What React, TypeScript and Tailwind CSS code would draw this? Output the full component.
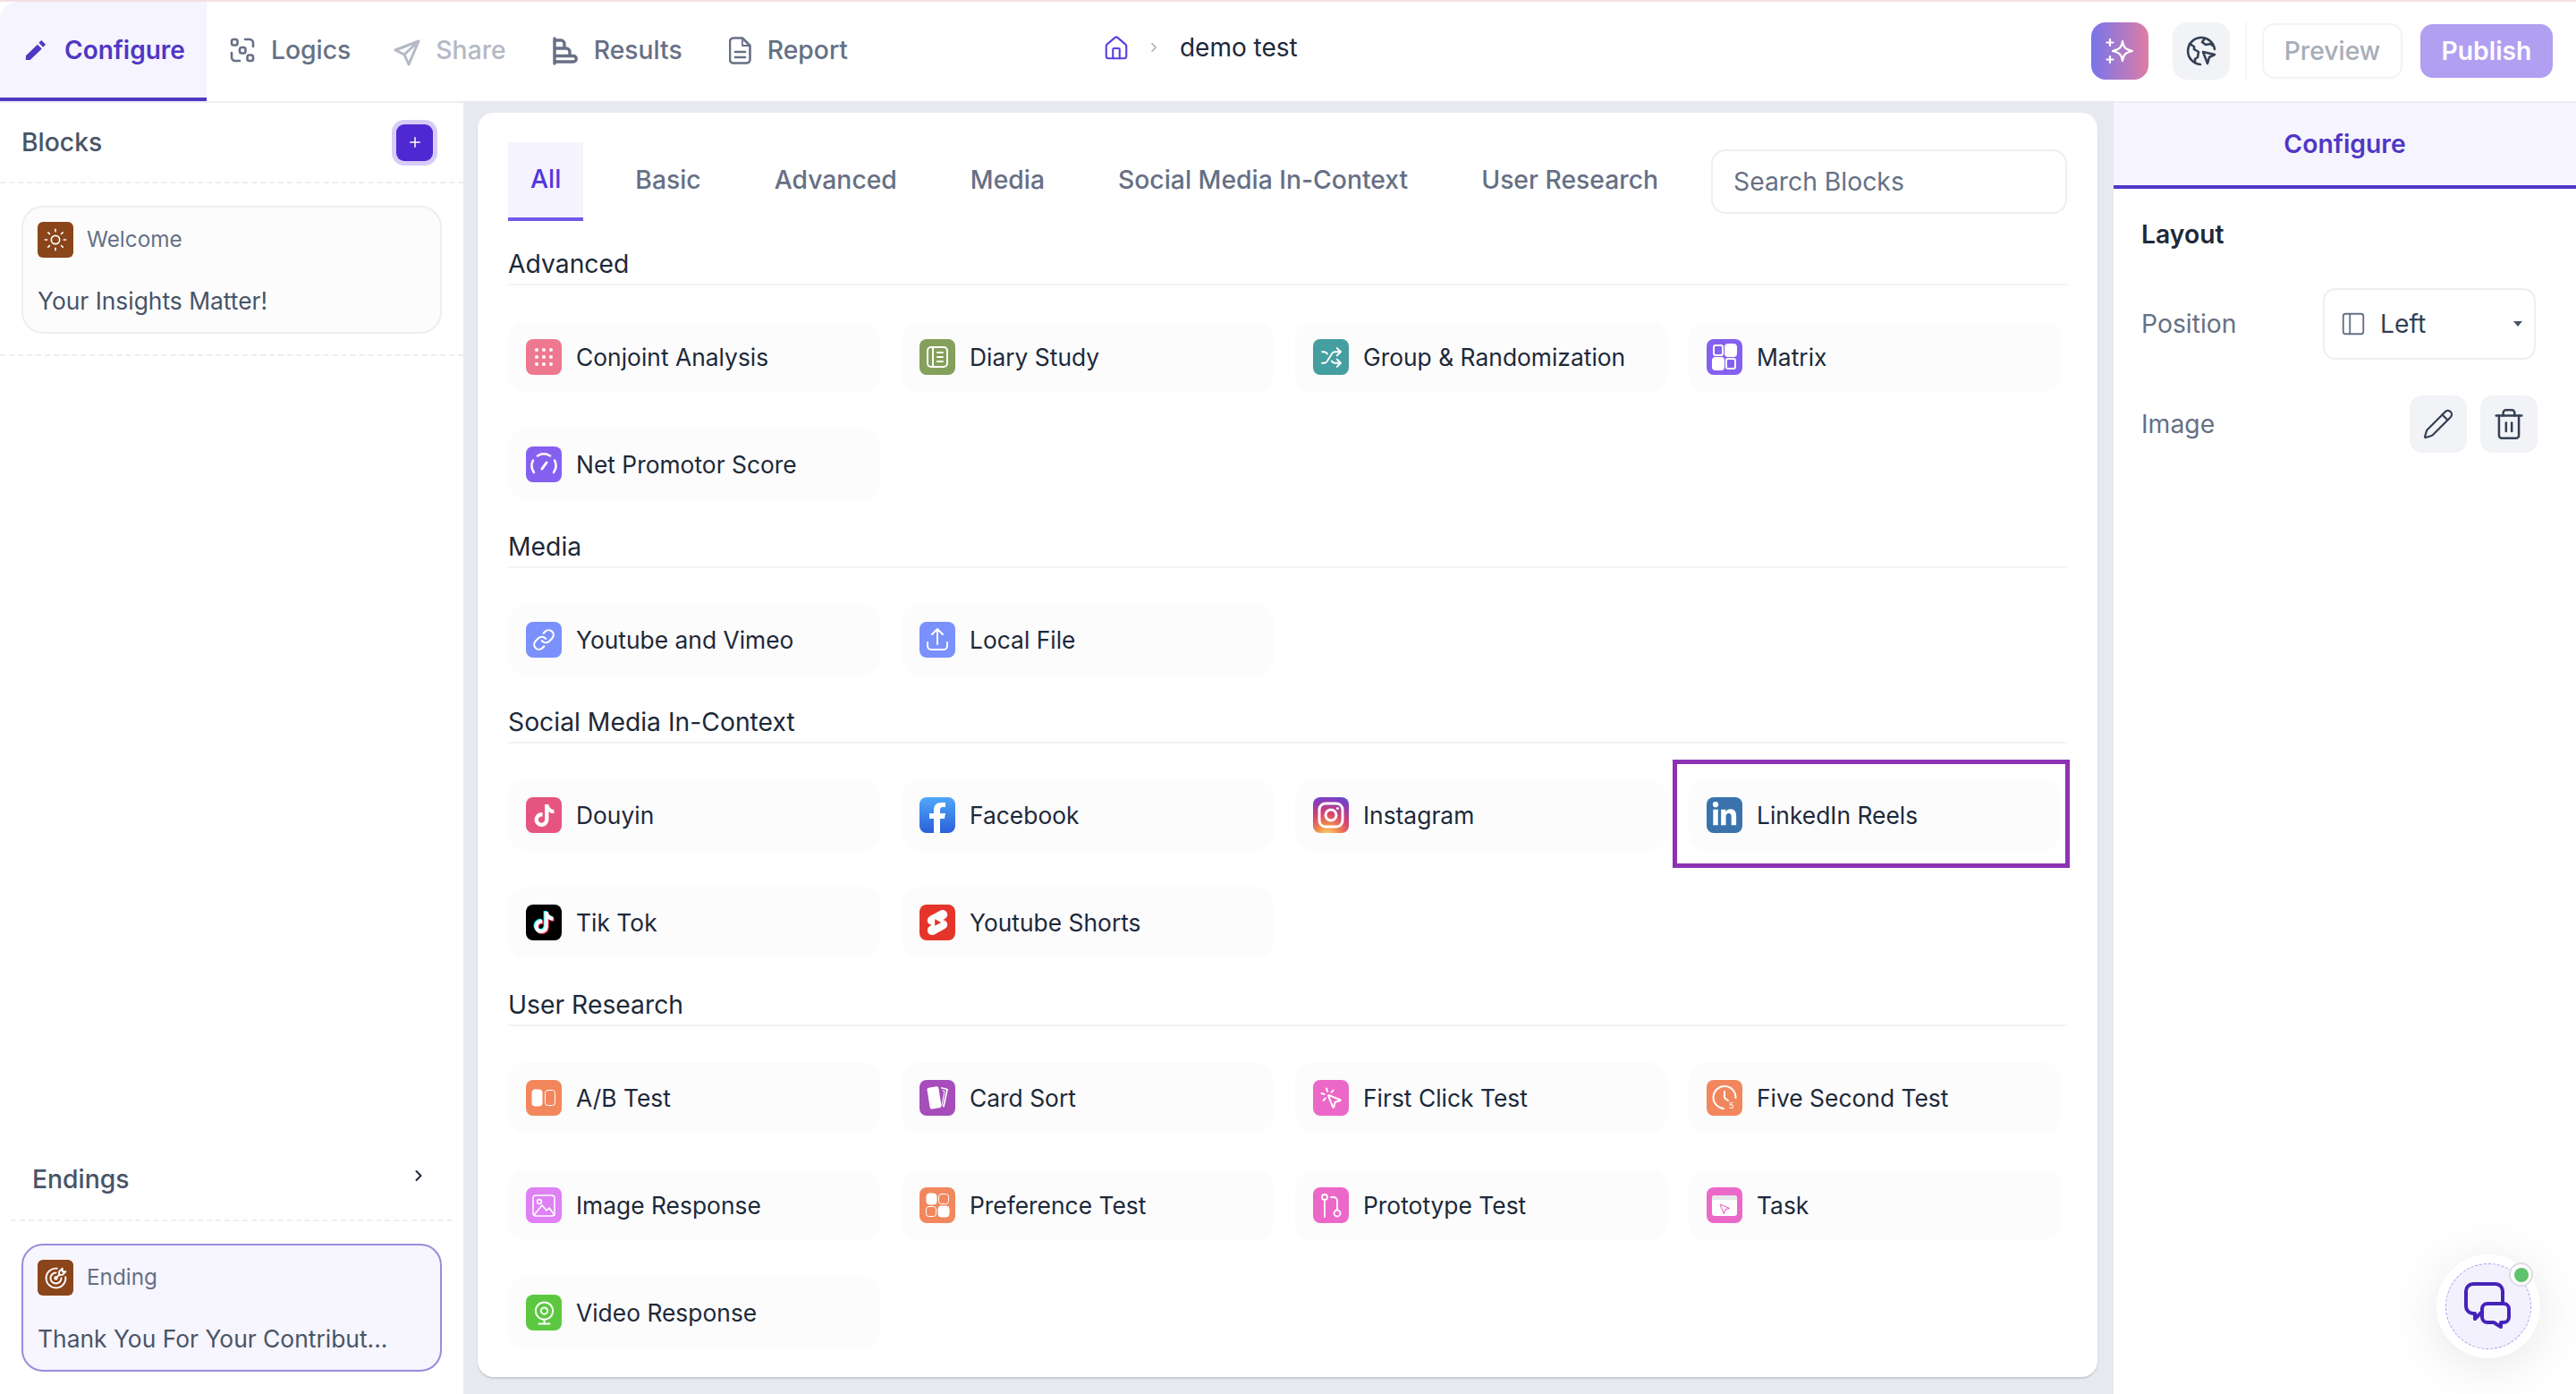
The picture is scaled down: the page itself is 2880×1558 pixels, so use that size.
import React from "react";
import { Shuffle, Link, MousePointerClick, Webcam, Sun, House, ChevronRight, Pencil, Trash2, PanelLeft, Plus, MousePointer2 } from "lucide-react";
import { FaTiktok, FaLinkedinIn } from "react-icons/fa";
import { SiYoutubeshorts } from "react-icons/si";
import { TbTargetArrow } from "react-icons/tb";

const V = ({ children }: { children: React.ReactNode }) => (
  <svg viewBox="0 0 40 40" className="w-full h-full" fill="none" stroke="white" strokeWidth="2" strokeLinecap="round" strokeLinejoin="round">
    {children}
  </svg>
);

const Dots = () => (
  <V>
    {[12, 20, 28].flatMap((y) => [12, 20, 28].map((x) => <circle key={`${x}-${y}`} cx={x} cy={y} r="2" fill="white" stroke="none" />))}
  </V>
);

type Item = { name: string; bg: string; icon: React.ReactNode };

const lucideCls = "text-white";

const advanced: Item[] = [
  { name: "Conjoint Analysis", bg: "bg-[#ee7890]", icon: <Dots /> },
  { name: "Diary Study", bg: "bg-[#84a05a]", icon: <V><rect x="9" y="9" width="22" height="22" rx="4" /><path d="M15 9v22M20 15h6M20 20h6M20 25h6" /></V> },
  { name: "Group & Randomization", bg: "bg-[#459ea0]", icon: <Shuffle size={25} strokeWidth={1.8} className={lucideCls} /> },
  { name: "Matrix", bg: "bg-[#8560f0]", icon: <V><rect x="8" y="7" width="10" height="11" rx="2" /><rect x="21" y="6" width="12" height="13" rx="3" fill="white" /><rect x="7" y="21" width="12" height="13" rx="3" fill="white" /><rect x="22" y="22" width="10" height="11" rx="2" /></V> },
  { name: "Net Promotor Score", bg: "bg-[#8560f0]", icon: <V><path d="M13 10.5A13 13 0 0 1 27 10.5" strokeWidth="2.5" /><path d="M8 15.5A13 13 0 0 0 9 29" strokeWidth="2.5" /><path d="M32 15.5A13 13 0 0 1 31 29" strokeWidth="2.5" /><path d="M18 25l5-7" strokeWidth="3" /></V> },
];
const media: Item[] = [
  { name: "Youtube and Vimeo", bg: "bg-[#7a90fb]", icon: <Link size={26} strokeWidth={2} className={lucideCls} /> },
  { name: "Local File", bg: "bg-[#7a90fb]", icon: <V><path d="M20 8v17M14 14l6-6 6 6M9 23v4a4 4 0 0 0 4 4h14a4 4 0 0 0 4-4v-4" /></V> },
];
const social: Item[] = [
  { name: "Douyin", bg: "bg-[#e5557f]", icon: <FaTiktok size={25} className="text-white" /> },
  { name: "Facebook", bg: "bg-[linear-gradient(180deg,#4fa8f8,#2a60d8)]", icon: <svg viewBox="0 0 40 40" className="w-full h-full"><path fill="white" d="M23 40V24h5l1-6h-6v-4c0-2 1-3 3-3h3V6h-5c-5 0-8 3-8 8v4h-5v6h5v16z" /></svg> },
  { name: "Instagram", bg: "bg-[radial-gradient(circle_at_40%_110%,#f9e08a_0%,#f2994a_22%,#d9436c_52%,#8a3ab9_80%,#5b51d8_100%)]", icon: <V><rect x="7" y="7" width="26" height="26" rx="7" strokeWidth="3" /><circle cx="20" cy="20" r="6" strokeWidth="3" /><circle cx="27.5" cy="12.5" r="1.5" fill="white" stroke="none" /></V> },
  { name: "LinkedIn Reels", bg: "bg-[#3a73ac]", icon: <FaLinkedinIn size={30} className="text-white" /> },
  { name: "Tik Tok", bg: "bg-black", icon: <FaTiktok size={24} className="text-white [filter:drop-shadow(-1px_-1px_0_#25f4ee)_drop-shadow(1px_1px_0_#fe2c55)]" /> },
  { name: "Youtube Shorts", bg: "bg-[#e5352b]", icon: <SiYoutubeshorts size={28} className="text-white" /> },
];
const research: Item[] = [
  { name: "A/B Test", bg: "bg-[#f2875e]", icon: <V><rect x="7" y="11" width="11" height="18" rx="3" fill="white" strokeWidth="1" /><rect x="21.5" y="11.5" width="11" height="17" rx="3" strokeWidth="1" /></V> },
  { name: "Card Sort", bg: "bg-[#a64dbb]", icon: <V><rect x="10" y="8" width="13" height="24" rx="2" fill="white" stroke="none" transform="rotate(-9 16 20)" /><path d="M25 9l6 1.5-4 19" strokeWidth="1.8" /><path d="M26 12l2 .5-3 16" stroke="white" strokeWidth="1" /></V> },
  { name: "First Click Test", bg: "bg-[#ec68c8]", icon: <MousePointerClick size={27} strokeWidth={1.8} className={lucideCls} /> },
  { name: "Five Second Test", bg: "bg-[#f2875e]", icon: <V><path d="M19 32A12.5 12.5 0 1 1 32.5 20" /><path d="M20 13v7l4 3" /><text x="25" y="32" fill="white" stroke="none" fontSize="9" fontFamily="Inter, sans-serif">5</text></V> },
  { name: "Image Response", bg: "bg-[#df80f5]", icon: <V><rect x="8" y="9" width="24" height="23" rx="3" strokeWidth="1.6" /><circle cx="15" cy="16" r="2.4" strokeWidth="1.6" /><path d="M9 31l9-11 5 6 3-3 6 8" strokeWidth="1.6" /></V> },
  { name: "Preference Test", bg: "bg-[#f2875e]", icon: <V><rect x="8" y="7" width="11" height="12" rx="3" fill="white" strokeWidth="1" /><rect x="21.5" y="7.5" width="11" height="11" rx="3" strokeWidth="1" /><rect x="7.5" y="21.5" width="11" height="11" rx="3" strokeWidth="1" /><rect x="21" y="21" width="12" height="12" rx="3" fill="white" strokeWidth="1" /></V> },
  { name: "Prototype Test", bg: "bg-[#ec68c8]", icon: <V><circle cx="13" cy="11" r="3" strokeWidth="1.8" /><path d="M13 14v19" strokeWidth="1.8" /><circle cx="27" cy="29" r="3.5" strokeWidth="1.8" /><path d="M20 11h3a4 4 0 0 1 4 4v10" strokeWidth="1.8" /></V> },
  { name: "Task", bg: "bg-[#ec68c8]", icon: <div className="w-[28px] h-[23px] rounded-[3px] bg-white overflow-hidden flex flex-col items-center"><div className="w-full h-[5px] bg-[#e5e7eb] shrink-0" /><MousePointer2 size={14} strokeWidth={1.8} className="text-[#ec68c8] mt-[3px]" /></div> },
  { name: "Video Response", bg: "bg-[#5cc841]", icon: <Webcam size={29} strokeWidth={1.6} className={lucideCls} /> },
];

const Card = ({ item }: { item: Item }) => (
  <div className="relative h-[80px] rounded-[20px] bg-[#fcfcfd] pl-[20px] flex items-center gap-[16px]">
    <div className={`w-[40px] h-[40px] rounded-[8px] overflow-hidden flex items-center justify-center shrink-0 ${item.bg}`}>{item.icon}</div>
    <span className="text-[#1d2939] text-[26.4px] leading-[36px] -mt-[1px]">{item.name}</span>
    {item.name === "LinkedIn Reels" && (
      <div className="absolute -left-[18px] -right-[10px] -top-[22px] -bottom-[19px] border-[5px] border-[#8e32b4]" />
    )}
  </div>
);

const Section = ({ title, items, first }: { title: string; items: Item[]; first?: boolean }) => (
  <section className={first ? "mt-[30px]" : "mt-[34px]"}>
    <h3 className="h-[42px] leading-[37px] border-b-2 border-[#f2f3f5] text-[#1d2939] text-[28.3px]">{title}</h3>
    <div className="mt-[40px] grid grid-cols-[repeat(4,416px)] gap-x-[24px] gap-y-[40px]">
      {items.map((i) => (
        <Card key={i.name} item={i} />
      ))}
    </div>
  </section>
);

const BlockCard = ({ icon, label, title, active }: { icon: React.ReactNode; label: string; title: string; active?: boolean }) => (
  <div className={`mx-[24px] h-[143px] rounded-[24px] border-2 pl-[16px] pt-[16px] ${active ? "border-[#9a8cdc] bg-[#f7f5fe]" : "border-[#eceef2] bg-[#fcfcfd]"}`}>
    <div className="flex items-center gap-[15px]">
      <div className="w-[40px] h-[40px] rounded-[6px] bg-[#8b451a] flex items-center justify-center shrink-0">{icon}</div>
      <span className="text-[24.3px] text-[#667085] -mt-[2px]">{label}</span>
    </div>
    <div className="mt-[30px] text-[26.4px] leading-[36px] text-[#475467]">{title}</div>
  </div>
);

const TopTab = ({ icon, label, cls, ml }: { icon: React.ReactNode; label: string; cls: string; ml: string }) => (
  <div className={`flex items-center gap-[18px] text-[28.3px] font-medium ${cls} ${ml}`}>
    {icon}
    <span className="-mt-[3px]">{label}</span>
  </div>
);

export default function App() {
  return (
    <div className="relative w-[2880px] h-[1558px] overflow-hidden flex flex-col bg-white [font-family:Inter,sans-serif]">
      <div className="h-[2px] bg-[#f3e0e0] shrink-0" />
      {/* header */}
      <header className="h-[111px] shrink-0 flex items-stretch">
        <div className="w-[231px] h-[111px] bg-[#f6f4fe] rounded-tl-[20px] border-b-[4px] border-[#5037c4] flex items-center pl-[27px] gap-[19px] text-[#5037c4] text-[28px] font-semibold">
          <svg viewBox="0 0 27 27" className="w-[26px] h-[26px]" fill="currentColor"><path d="M20 2l5 5-3 3-5-5zM15.5 7l5 5L7 25H2v-5z" /></svg>
          <span>Configure</span>
        </div>
        <div className="flex items-center ml-[26px]">
          <TopTab
            cls="text-[#667085]"
            ml=""
            label="Logics"
            icon={
              <svg viewBox="0 0 28 28" className="w-[28px] h-[28px] -mt-[4px]" fill="none" stroke="currentColor" strokeWidth="2.6" strokeLinecap="round">
                <rect x="2" y="2" width="6.5" height="6.5" rx="2.2" />
                <path d="M17 2h5a4 4 0 0 1 4 4v4" />
                <rect x="11" y="11" width="6.5" height="6.5" rx="2.2" />
                <path d="M2 17v5a4 4 0 0 0 4 4h5" />
                <rect x="19.5" y="19.5" width="6.5" height="6.5" rx="2.2" />
              </svg>
            }
          />
          <TopTab
            cls="text-[#b4b9c4]"
            ml="ml-[47px]"
            label="Share"
            icon={
              <svg viewBox="0 0 32 32" className="w-[32px] h-[32px] mt-[2px] -mr-[2px]" fill="none" stroke="currentColor" strokeWidth="3" strokeLinejoin="round">
                <path d="M29 3L3 13l10 5 5 11zM29 3L13 18" />
              </svg>
            }
          />
          <TopTab
            cls="text-[#667085]"
            ml="ml-[52px]"
            label="Results"
            icon={
              <svg viewBox="0 0 28 32" className="w-[28px] h-[32px] -mt-[2px]" fill="none" stroke="currentColor" strokeWidth="3.4" strokeLinecap="round">
                <path d="M2 2v28M2 4h7a4 4 0 0 1 4 4v5M2 13h13a4 4 0 0 1 4 4v4M2 21.5h21a3 3 0 0 1 0 6.5H2" />
              </svg>
            }
          />
          <TopTab
            cls="text-[#667085]"
            ml="ml-[52px]"
            label="Report"
            icon={
              <svg viewBox="0 0 25 31" className="w-[25px] h-[31px] -mt-[2px]" fill="none" stroke="currentColor" strokeWidth="2.6" strokeLinejoin="round" strokeLinecap="round">
                <path d="M5 1.5h10l8.5 8.5v15.5a4 4 0 0 1-4 4H5a4 4 0 0 1-4-4v-20a4 4 0 0 1 4-4z" />
                <path d="M15 2v8h8" strokeWidth="1.8" />
                <path d="M7 17h11M7 23h11" />
              </svg>
            }
          />
        </div>
        <div className="flex items-center ml-[285px] -mt-[9px]">
          <House size={30} strokeWidth={1.7} className="text-[#5d3fe0] mt-[2px]" />
          <ChevronRight size={18} strokeWidth={1.5} className="text-[#98a2b3] ml-[18px]" />
          <span className="ml-[20px] text-[28px] text-[#1d2939]">demo test</span>
        </div>
        <div className="ml-auto mr-[26px] flex items-center -mt-[2px]">
          <div className="w-[64px] h-[64px] rounded-[16px] bg-[linear-gradient(90deg,#7675ea,#de7da6)] flex items-center justify-center">
            <svg viewBox="0 0 32 32" className="w-[32px] h-[32px]" fill="none" stroke="white" strokeWidth="2.2" strokeLinecap="round" strokeLinejoin="round">
              <path d="M19 5c1 7 3 9 11 11-8 2-10 4-11 11-1-7-3-9-11-11 8-2 10-4 11-11z" />
              <path d="M5 3v7M1.5 6.5h7M5 22v7M1.5 25.5h7" />
            </svg>
          </div>
          <div className="ml-[27px] w-[64px] h-[64px] rounded-[16px] bg-[#f2f3f7] flex items-center justify-center">
            <svg viewBox="0 0 34 34" className="w-[34px] h-[34px]" fill="none" stroke="#344054" strokeWidth="2.6" strokeLinecap="round" strokeLinejoin="round">
              <path d="M16 32A15 15 0 1 1 32 15" />
              <path d="M4 9l5 3v3l5 3-1 6-3 2v3M21 3l-3 4 4 3 5-1 3 2" />
              <path d="M19 18l13 3-6 3-2 7z" />
            </svg>
          </div>
          <div className="ml-[17px] w-[2px] h-[64px] bg-[#f5f5f7]" />
          <div className="ml-[17px] w-[157px] h-[62px] pt-[2px] rounded-[14px] border-2 border-[#f2f3f5] flex items-center justify-center text-[28.3px] font-medium text-[#a8adb7]">Preview</div>
          <div className="ml-[20px] w-[148px] h-[60px] pt-[2px] rounded-[14px] bg-[#b19ff2] flex items-center justify-center text-[28.3px] font-semibold text-white">Publish</div>
        </div>
      </header>

      <div className="flex-1 min-h-0 flex">
        {/* left */}
        <aside className="w-[518px] shrink-0 flex flex-col border-t-2 border-[#eceef2]">
          <div className="h-[90px] shrink-0 border-b-2 border-dashed border-[#eceef2] flex items-center justify-between pl-[24px] pr-[29px]">
            <span className="text-[28.3px] font-medium text-[#475467]">Blocks</span>
            <div className="w-[41px] h-[41px] rounded-[9px] bg-[#5028d2] ring-[5px] ring-[#d6ccf8] flex items-center justify-center mr-[5px]">
              <Plus size={18} strokeWidth={2} className="text-white" />
            </div>
          </div>
          <div className="pt-[25px] pb-[23px] border-b-2 border-dashed border-[#eceef2]">
            <BlockCard icon={<Sun size={28} strokeWidth={1.4} className="text-white" />} label="Welcome" title="Your Insights Matter!" />
          </div>
          <div className="flex-1" />
          <div className="mx-[12px] h-[92px] border-b-2 border-dashed border-[#eceef2] flex items-center justify-between pl-[24px] pr-[28px]">
            <span className="text-[28.3px] font-medium text-[#475467]">Endings</span>
            <ChevronRight size={20} strokeWidth={2.4} className="text-[#1d2939] -mt-[8px]" />
          </div>
          <div className="pt-[25px] pb-[25px]">
            <BlockCard active icon={<TbTargetArrow size={29} strokeWidth={1.6} className="text-white" />} label="Ending" title="Thank You For Your Contribut..." />
          </div>
        </aside>

        {/* main */}
        <main className="flex-1 min-w-0 bg-[#e8e9ee] pl-[16px] pr-[18px] pt-[13px] pb-[19px]">
          <div className="h-full rounded-[18px] bg-white shadow-[0_2px_2px_rgba(16,24,40,0.14)] pt-[33px] px-[34px]">
            <div className="flex items-start">
              <div className="h-[88px] px-[25px] pb-[2px] flex items-center bg-[#f5f3fe] border-b-[4px] border-[#6f5ae8] text-[#5037dc] text-[28.3px] font-medium">All</div>
              {["Basic", "Advanced", "Media", "Social Media In-Context", "User Research"].map((t, i) => (
                <div key={t} className={`h-[88px] px-[25px] pb-[4px] flex items-center text-[#667085] text-[28.3px] font-medium ${i === 0 ? "ml-[33px]" : "ml-[32px]"}`}>
                  {t}
                </div>
              ))}
              <div className="ml-auto mt-[8px] w-[398px] h-[72px] rounded-[16px] border-2 border-[#eceef2] pl-[23px] flex items-center text-[28.3px] text-[#667085]">Search Blocks</div>
            </div>
            <Section first title="Advanced" items={advanced} />
            <Section title="Media" items={media} />
            <Section title="Social Media In-Context" items={social} />
            <Section title="User Research" items={research} />
          </div>
        </main>

        {/* right */}
        <aside className="w-[517px] shrink-0 flex flex-col border-t-2 border-[#eceef2]">
          <div className="h-[96px] bg-[#f6f4fe] border-b-[4px] border-[#5037c4] flex items-center justify-center text-[28.3px] font-semibold text-[#5037c4]">Configure</div>
          <div className="pl-[31px] pr-[43px]">
            <div className="mt-[31px] h-[40px] leading-[40px] text-[28.3px] font-semibold text-[#1d2939]">Layout</div>
            <div className="mt-[40px] flex items-center justify-between h-[80px]">
              <span className="text-[28.3px] text-[#667085]">Position</span>
              <div className="w-[238px] h-[80px] mr-[2px] rounded-[14px] border-2 border-[#eceef2] flex items-center pl-[17px]">
                <PanelLeft size={30} strokeWidth={1.5} className="text-[#667085]" />
                <span className="ml-[15px] text-[28.3px] text-[#344054]">Left</span>
                <span className="ml-auto mr-[13px] w-0 h-0 border-x-[5px] border-x-transparent border-t-[6px] border-t-[#475467]" />
              </div>
            </div>
            <div className="mt-[40px] flex items-center h-[64px]">
              <span className="text-[28.3px] text-[#667085]">Image</span>
              <div className="ml-auto w-[64px] h-[64px] rounded-[14px] bg-[#f2f3f7] flex items-center justify-center">
                <Pencil size={36} strokeWidth={1.5} className="text-[#344054]" />
              </div>
              <div className="ml-[15px] w-[64px] h-[64px] rounded-[14px] bg-[#f2f3f7] flex items-center justify-center">
                <Trash2 size={38} strokeWidth={1.6} className="text-[#344054]" />
              </div>
            </div>
          </div>
        </aside>
      </div>

      {/* chat widget */}
      <div className="absolute right-[40px] bottom-[40px] w-[116px] h-[116px] rounded-full bg-white shadow-[0_8px_60px_rgba(16,24,40,0.10)] flex items-center justify-center">
        <div className="w-[96px] h-[96px] rounded-full bg-[#f3f1fd] border border-dashed border-[#a79bea] flex items-center justify-center">
          <svg viewBox="0 0 54 54" className="w-[54px] h-[54px]" fill="none" stroke="#4523b8" strokeWidth="4" strokeLinejoin="round" strokeLinecap="round">
            <path d="M19 34l-7 7v-6h-2a8 8 0 0 1-8-8V10a8 8 0 0 1 8-8h25a8 8 0 0 1 8 8v12" />
            <path d="M26 24h18a6 6 0 0 1 6 6v9a6 6 0 0 1-6 6h-3v5l-8-5h-7a6 6 0 0 1-6-6v-9a6 6 0 0 1 6-6z" />
          </svg>
        </div>
        <div className="absolute left-[81px] top-[9px] w-[27px] h-[27px] rounded-full bg-white border-2 border-[#dddddf] flex items-center justify-center">
          <div className="w-[16px] h-[16px] rounded-full bg-[#5fc26c]" />
        </div>
      </div>
    </div>
  );
}
